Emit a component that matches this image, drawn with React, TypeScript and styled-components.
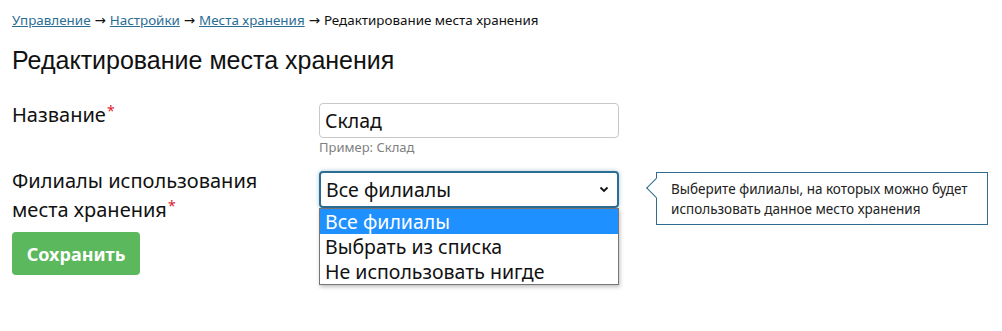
import React from "react";
import styled, { createGlobalStyle } from "styled-components";

const Global = createGlobalStyle`
  html, body { margin: 0; padding: 0; background: #fff; }
  body { font-family: "Open Sans", "Noto Sans", "DejaVu Sans", sans-serif; color: #111; }
`;

const Page = styled.div`
  padding: 10px 12px 0 12px;
  width: 1002px;
  height: 331px;
  box-sizing: border-box;
  overflow: hidden;
`;

const Crumbs = styled.nav`
  font-family: "Noto Sans", "DejaVu Sans", sans-serif;
  font-size: 13.4px;
  line-height: 20px;
  color: #111;
`;

const Crumb = styled.a`
  color: #2a6d94;
  text-decoration: underline;
`;

const Arrow = styled.span`
  margin: 0 4px;
`;

const Title = styled.h1`
  font-family: "Liberation Sans", Arial, sans-serif;
  font-weight: normal;
  font-size: 25px;
  line-height: 30px;
  margin: 15px 0 0 0;
  color: #111;
`;

const Row = styled.div<{ $top: number }>`
  display: grid;
  grid-template-columns: 307px 300px 1fr;
  margin-top: ${(p) => p.$top}px;
  align-items: start;
`;

const Label = styled.div<{ $mt: number }>`
  font-family: "Noto Sans", "Open Sans", sans-serif;
  font-size: 20px;
  line-height: 24.5px;
  margin-top: ${(p) => p.$mt}px;
  color: #111;
`;

const Req = styled.span`
  color: #e0192b;
  font-size: 14px;
  vertical-align: 6px;
  margin-left: 1px;
`;

const Field = styled.div`
  position: relative;
`;

const TextInput = styled.div`
  height: 35px;
  box-sizing: border-box;
  border: 1px solid #c8c8c8;
  border-radius: 4px;
  padding: 0 5px;
  display: flex;
  align-items: center;
  font-family: "Noto Sans", "Open Sans", sans-serif;
  font-size: 19.5px;
  color: #111;
`;

const Hint = styled.div`
  font-family: "Noto Sans", "Open Sans", sans-serif;
  font-size: 13px;
  line-height: 16px;
  color: #808080;
  margin-top: 1px;
`;

const Select = styled.div`
  height: 37px;
  box-sizing: border-box;
  border: 2px solid #2b6e93;
  border-radius: 4px;
  padding: 0 8px 0 5px;
  display: flex;
  align-items: center;
  justify-content: space-between;
  font-family: "Noto Sans", "Open Sans", sans-serif;
  font-size: 19.5px;
  color: #111;
  box-shadow: 0 0 4px rgba(43, 110, 147, 0.4);
`;

const Menu = styled.ul`
  position: absolute;
  left: 0;
  top: 37px;
  width: 300px;
  box-sizing: border-box;
  margin: 0;
  padding: 0;
  list-style: none;
  background: #fff;
  border: 1px solid #767676;
  box-shadow: 1px 2px 4px rgba(0, 0, 0, 0.25);
  z-index: 2;
`;

const Option = styled.li<{ $active?: boolean }>`
  height: 25px;
  line-height: 25px;
  padding: 0 5px;
  font-family: "Noto Sans", "Open Sans", sans-serif;
  font-size: 19.5px;
  background: ${(p) => (p.$active ? "#1e90ff" : "#fff")};
  color: ${(p) => (p.$active ? "#fff" : "#111")};
`;

const TipWrap = styled.div`
  padding-left: 37px;
  padding-top: 1px;
`;

const Tip = styled.div`
  position: relative;
  width: 332px;
  height: 53px;
  box-sizing: border-box;
  border: 1.5px solid #2e6d8e;
  padding: 6px 14px;
  font-family: "Noto Sans", "Open Sans", sans-serif;
  font-size: 13.5px;
  line-height: 20px;
  color: #222;
  background: #fff;
  white-space: nowrap;
  &::before {
    content: "";
    position: absolute;
    left: -8px;
    top: 8px;
    width: 13px;
    height: 13px;
    background: #fff;
    border-left: 1.5px solid #2e6d8e;
    border-bottom: 1.5px solid #2e6d8e;
    transform: rotate(45deg);
    transform-origin: center;
  }
`;

const Button = styled.button`
  margin-top: 10px;
  width: 128px;
  height: 43px;
  border: none;
  border-radius: 4px;
  background: #5cb85c;
  color: #fff;
  font-family: "Noto Sans", "Open Sans", sans-serif;
  font-weight: bold;
  font-size: 18px;
  padding: 0;
  cursor: pointer;
`;

const Chevron = () => (
  <svg width="10" height="7" viewBox="0 0 10 7">
    <path d="M1.5 1.5 L5 5 L8.5 1.5" fill="none" stroke="#111" strokeWidth="1.8" />
  </svg>
);

export default function App() {
  return (
    <>
      <Global />
      <Page>
        <Crumbs>
          <Crumb href="#">Управление</Crumb>
          <Arrow>→</Arrow>
          <Crumb href="#">Настройки</Crumb>
          <Arrow>→</Arrow>
          <Crumb href="#">Места хранения</Crumb>
          <Arrow>→</Arrow>
          Редактирование места хранения
        </Crumbs>
        <Title>Редактирование места хранения</Title>
        <Row $top={28}>
          <Label $mt={-4}>
            Название<Req>*</Req>
          </Label>
          <Field>
            <TextInput>Склад</TextInput>
            <Hint>Пример: Склад</Hint>
          </Field>
        </Row>
        <Row $top={16}>
          <div>
            <Label $mt={-2}>
              Филиалы использования
              <br />
              места хранения<Req>*</Req>
            </Label>
            <Button>Сохранить</Button>
          </div>
          <Field>
            <Select>
              <span>Все филиалы</span>
              <Chevron />
            </Select>
            <Menu>
              <Option $active>Все филиалы</Option>
              <Option>Выбрать из списка</Option>
              <Option>Не использовать нигде</Option>
            </Menu>
          </Field>
          <TipWrap>
            <Tip>
              Выберите филиалы, на которых можно будет
              <br />
              использовать данное место хранения
            </Tip>
          </TipWrap>
        </Row>
      </Page>
    </>
  );
}
